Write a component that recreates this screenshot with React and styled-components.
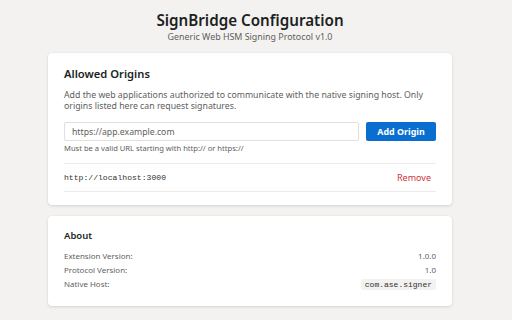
import styled, { createGlobalStyle } from "styled-components";

const Global = createGlobalStyle`
  html, body {
    margin: 0;
    padding: 0;
    background: #f3f2f1;
    font-family: "Noto Sans", "Open Sans", sans-serif;
    color: #323130;
  }
  * { box-sizing: border-box; }
`;

const Page = styled.div`
  width: 512px;
  height: 320px;
  overflow: hidden;
  padding: 10px 60px 0 48px;
  display: flex;
  flex-direction: column;
  gap: 11px;
`;

const Header = styled.header`
  display: flex;
  flex-direction: column;
  align-items: center;
`;

const Title = styled.h1`
  margin: 0;
  font-size: 15.2px;
  font-weight: 600;
  line-height: 21px;
  color: #201f1e;
`;

const Subtitle = styled.p`
  margin: 0;
  font-size: 8.9px;
  line-height: 11px;
  color: #605e5c;
`;

const Card = styled.section`
  background: #fff;
  border-radius: 4px;
  box-shadow: 0 1px 3px rgba(0, 0, 0, 0.12), 0 0 1px rgba(0, 0, 0, 0.08);
  padding: ${({ $pad }) => $pad || "13px 16px 13px"};
`;

const CardTitle = styled.h2`
  margin: 0 0 ${({ $gap }) => $gap || "8px"};
  font-size: ${({ $size }) => $size || "11.2px"};
  font-weight: 600;
  line-height: 16px;
  color: #201f1e;
`;

const Description = styled.p`
  margin: 0 0 11px;
  font-size: 8.75px;
  line-height: 10.5px;
  color: #605e5c;
`;

const InputRow = styled.div`
  display: flex;
  gap: 7px;
`;

const Input = styled.input`
  flex: 1;
  height: 19px;
  border: 1px solid #e1dfdd;
  border-radius: 2px;
  padding: 0 7px;
  font-family: inherit;
  font-size: 8.7px;
  color: #323130;
  outline: none;
  &::placeholder { color: #605e5c; }
`;

const Button = styled.button`
  width: 70px;
  height: 19px;
  border: none;
  border-radius: 2px;
  background: #0a6ed1;
  color: #fff;
  font-family: inherit;
  font-size: 8.9px;
  font-weight: 700;
  padding: 0;
`;

const Hint = styled.div`
  margin-top: 3px;
  font-size: 7.6px;
  line-height: 9px;
  color: #605e5c;
`;

const OriginList = styled.ul`
  list-style: none;
  margin: 10px 0 0;
  padding: 0;
  border-top: 1px solid #edebe9;
`;

const OriginItem = styled.li`
  display: flex;
  justify-content: space-between;
  align-items: center;
  height: 28px;
  border-bottom: 1px solid #edebe9;
`;

const Mono = styled.span`
  font-family: "Liberation Mono", "DejaVu Sans Mono", monospace;
  font-size: 8.1px;
  color: #323130;
`;

const RemoveLink = styled.button`
  border: none;
  background: none;
  padding: 0 5px 0 0;
  font-family: inherit;
  font-size: 9px;
  color: #d13438;
`;

const InfoRow = styled.div`
  display: flex;
  justify-content: space-between;
  align-items: center;
  height: 14px;
  font-size: 7.95px;
  color: #605e5c;
`;

const Code = styled.code`
  font-family: "Liberation Mono", "DejaVu Sans Mono", monospace;
  font-size: 8px;
  line-height: 11px;
  background: #f3f2f1;
  color: #323130;
  border-radius: 2px;
  padding: 0 4px;
`;

export default function App() {
  return (
    <>
      <Global />
      <Page>
        <Header>
          <Title>SignBridge Configuration</Title>
          <Subtitle>Generic Web HSM Signing Protocol v1.0</Subtitle>
        </Header>

        <Card>
          <CardTitle>Allowed Origins</CardTitle>
          <Description>
            Add the web applications authorized to communicate with the native
            signing host. Only origins listed here can request signatures.
          </Description>
          <InputRow>
            <Input placeholder="https://app.example.com" />
            <Button>Add Origin</Button>
          </InputRow>
          <Hint>Must be a valid URL starting with http:// or https://</Hint>
          <OriginList>
            <OriginItem>
              <Mono>http://localhost:3000</Mono>
              <RemoveLink>Remove</RemoveLink>
            </OriginItem>
          </OriginList>
        </Card>

        <Card $pad="12px 16px 15px">
          <CardTitle $size="9.5px" $gap="5px">About</CardTitle>
          <InfoRow>
            <span>Extension Version:</span>
            <span>1.0.0</span>
          </InfoRow>
          <InfoRow>
            <span>Protocol Version:</span>
            <span>1.0</span>
          </InfoRow>
          <InfoRow>
            <span>Native Host:</span>
            <Code>com.ase.signer</Code>
          </InfoRow>
        </Card>
      </Page>
    </>
  );
}
